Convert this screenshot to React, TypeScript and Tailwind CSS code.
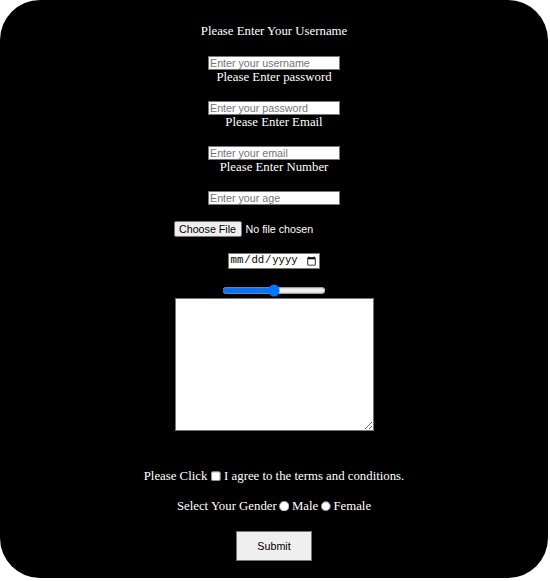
const inputCls =
  "block w-[132px] h-[14px] bg-white border border-[#767676] px-[1px] text-[10.7px] leading-[12px] font-['Liberation_Sans',Arial,sans-serif] text-black placeholder:text-[#757575] outline-none";

const labelCls = "block h-[15px] leading-[15px] text-[12.8px]";

export default function App() {
  return (
    <div className="w-[550px] h-[581px] bg-white">
      <form className="w-[548px] h-[578px] bg-black rounded-[40px] text-white font-['Liberation_Serif','Times_New_Roman',serif] flex flex-col items-center pt-[24px]">
        <label className={labelCls}>Please Enter Your Username</label>
        <input className={inputCls + " mt-[17px]"} type="text" placeholder="Enter your username" />
        <label className={labelCls}>Please Enter password</label>

        <input className={inputCls + " mt-[16px]"} type="password" placeholder="Enter your password" />
        <label className={labelCls}>Please Enter Email</label>

        <input className={inputCls + " mt-[16px]"} type="email" placeholder="Enter your email" />
        <label className={labelCls}>Please Enter Number</label>

        <input className={inputCls + " mt-[16px]"} type="number" placeholder="Enter your age" />

        {/* file picker */}
        <div className="mt-[16px] w-[201px] h-[16px] flex items-center gap-[4px] font-['Liberation_Sans',Arial,sans-serif] text-[10.7px]">
          <span className="h-[16px] w-[68px] flex items-center justify-center bg-[#efefef] border border-[#767676] rounded-[2px] text-black">
            Choose File
          </span>
          <span className="text-white">No file chosen</span>
        </div>

        <input
          type="date"
          className="mt-[20px] [zoom:0.8] w-[115px] h-[20px] bg-white border border-[#767676] text-black text-[13.33px] font-['Liberation_Mono',monospace] px-[1px]"
        />

        <input type="range" className="mt-[19px] [zoom:0.8] accent-[#0075ff]" />

        <textarea className="mt-[1px] w-[199px] h-[133px] bg-white border border-[#767676] text-black" />

        <p className="mt-[38px] h-[15px] leading-[15px] text-[12.8px] flex items-center">
          Please Click
          <input type="checkbox" className="[zoom:0.8] mx-[4px]" />
          I agree to the terms and conditions.
        </p>

        <p className="mt-[15px] h-[15px] leading-[15px] text-[12.8px] flex items-center">
          Select Your Gender
          <input type="radio" name="gender" className="[zoom:0.8] mx-[3px]" />
          Male
          <input type="radio" name="gender" className="[zoom:0.8] mx-[3px]" />
          Female
        </p>

        <button
          type="button"
          className="mt-[17px] w-[76px] h-[30px] bg-[#efefef] border border-[#767676] text-black text-[10.7px] font-['Liberation_Sans',Arial,sans-serif]"
        >
          Submit
        </button>
      </form>
    </div>
  );
}
